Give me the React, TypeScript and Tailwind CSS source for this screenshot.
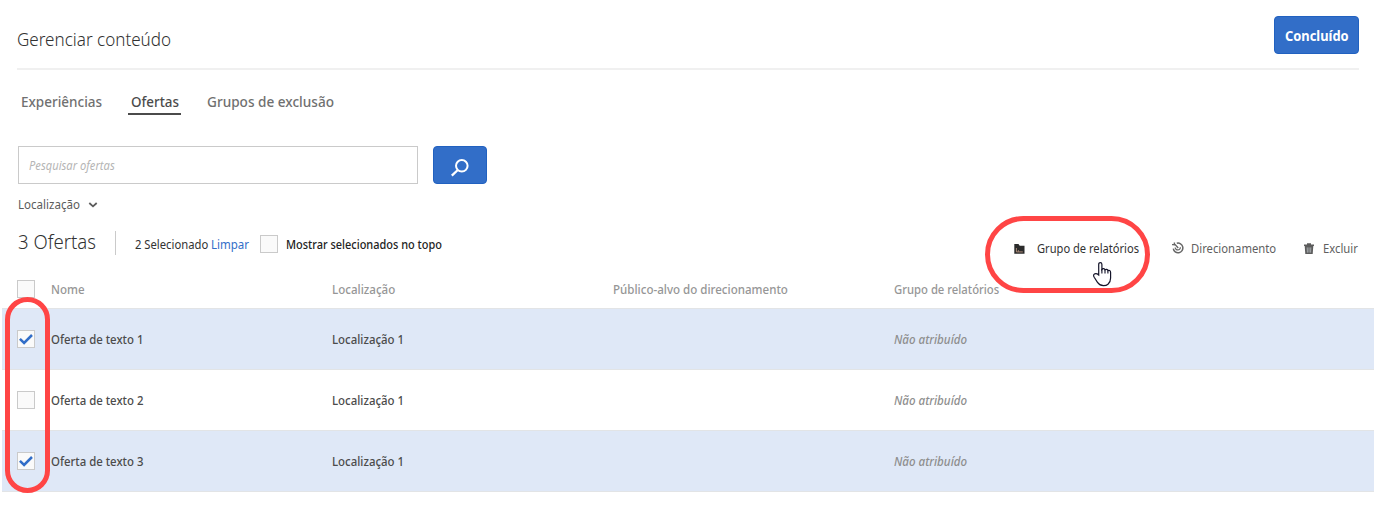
import type { ReactNode } from "react";

/* Text set slightly condensed inside a box of known width. */
function T({ box = "", text = "", children }: { box?: string; text?: string; children: ReactNode }) {
  return (
    <span className={"block shrink-0 whitespace-nowrap " + box}>
      <span className={"inline-block origin-left " + text}>{children}</span>
    </span>
  );
}

function Checkbox({ checked = false }: { checked?: boolean }) {
  return (
    <span className="flex h-[18px] w-[18px] shrink-0 items-center justify-center border border-[#cacaca] bg-[#fafafa]">
      {checked && (
        <svg width="16" height="16" viewBox="0 0 16 16" fill="none">
          <path d="M1.9 7.8 6.1 12 14 4" stroke="#326ec8" strokeWidth="2.5" />
        </svg>
      )}
    </span>
  );
}

const rows = [
  { name: "Oferta de texto 1", checked: true },
  { name: "Oferta de texto 2", checked: false },
  { name: "Oferta de texto 3", checked: true },
];

export default function App() {
  return (
    <div className="relative h-[511px] w-[1376px] overflow-hidden bg-white text-[13px] leading-[18px] text-[#4b4b4b] [font-family:'Noto_Sans',sans-serif]">
      <header className="mx-[17px] flex h-[70px] items-start justify-between border-b-2 border-[#f0f0f0]">
        <T box="pt-[26px] w-[154px]" text="scale-x-[.897] text-[19px] font-light leading-[26px] text-[#323232]">Gerenciar conteúdo</T>
        <button className="mt-4 flex h-[38px] w-[85px] items-center rounded-[4px] border border-[#2161c0] bg-[#326ec8] pl-[10px] text-left text-white">
          <T box="w-[64px] pt-[2px]" text="scale-x-[.92] text-[14px] font-bold">Concluído</T>
        </button>
      </header>

      <nav className="ml-[21px] flex h-[76px] pt-[21px] text-[15px] font-medium leading-5 text-[#707070]">
        <T box="w-[107px]" text="scale-x-[.9]">Experiências</T>
        <div className="h-[24px] w-[53px] border-b-2 border-[#4b4b4b] pl-[3px] text-[#4b4b4b]">
          <T box="w-[48px]" text="scale-x-[.894]">Ofertas</T>
        </div>
        <T box="ml-[26px] w-[127px]" text="scale-x-[.906]">Grupos de exclusão</T>
      </nav>

      <div className="ml-[18px] flex gap-[15px]">
        <div className="flex h-[38px] w-[400px] items-center border border-[#cacaca] pl-[10px] italic text-[#b5b5b5]">
          <T text="scale-x-[.93] text-[12px]">Pesquisar ofertas</T>
        </div>
        <button className="flex h-[38px] w-[54px] items-center justify-center rounded-[4px] border border-[#2161c0] bg-[#326ec8]">
          <svg width="20" height="20" viewBox="0 0 20 20" fill="none" stroke="#fff" className="mt-[5px]">
            <circle cx="11.8" cy="7.8" r="5.8" strokeWidth="2" />
            <path d="M7.8 12 1.8 17.6" strokeWidth="2.3" />
          </svg>
        </button>
      </div>

      <div className="ml-[18px] flex h-[40px] items-center">
        <T box="w-[62px]" text="scale-x-[.889] text-[#5c5c5c]">Localização</T>
        <svg width="10" height="6" viewBox="0 0 10 6" fill="none" className="ml-[8px] mt-[2px]">
          <path d="M1.3 1 5 4.4 8.7 1" stroke="#5c5c5c" strokeWidth="1.8" />
        </svg>
      </div>

      <div className="ml-[18px] mr-[17px] flex h-[56px] text-[#323232]">
        <T box="pt-[4px] w-[97px]" text="scale-x-[.928] text-[20px] font-light leading-[28px]">3 Ofertas</T>
        <div className="mt-[7px] h-6 w-px bg-[#cacaca]" />
        <div className="ml-[19px] flex h-[40px] items-center">
          <T box="w-[76px]" text="scale-x-[.865]">2 Selecionado</T>
          <T box="w-[49px]" text="scale-x-[.885] text-[#326ec8]">Limpar</T>
          <Checkbox />
          <T box="ml-2 w-[157px]" text="scale-x-[.843] font-medium text-[#222]">Mostrar selecionados no topo</T>
        </div>
        <div className="ml-auto flex h-[48px] items-center text-[#5f5f5f]">
          <svg width="11" height="10" viewBox="0 0 11 10" className="mt-[2px]">
            <path d="M0.3 0H4.5L5.7 1.8H10.5V9.8H0.3Z" fill="#2b2b2b" />
            <path d="M2.4 4V7.9H8.8M4.4 7.6V6.2" fill="none" stroke="#c9a28a" strokeWidth=".8" />
          </svg>
          <T box="ml-[12px] w-[103px]" text="scale-x-[.855] text-[#323232]">Grupo de relatórios</T>
          <svg width="12" height="12" viewBox="0 0 12 12" fill="none" stroke="#666" className="ml-[32px]">
            <path d="M4.8 1.3A4.8 4.8 0 1 1 1.3 6.6" strokeWidth="1.5" />
            <path d="M3.2 5.4A2.6 2.6 0 1 0 8.4 5.2" strokeWidth="1.2" />
            <path d="M0 2.6H3.2L6.2 6M2.4 .4V3.4" strokeWidth="1.4" />
          </svg>
          <T box="ml-[7px] w-[86px]" text="scale-x-[.868]">Direcionamento</T>
          <svg width="10" height="11" viewBox="0 0 10 11" className="ml-[27px] mt-px">
            <path d="M3 .3H7V1.5H10V3H0V1.5H3ZM.7 3H9.3L8.7 11H1.3Z" fill="#5c5c5c" />
            <path d="M3.2 4.4 3.4 9.6M5 4.4V9.6M6.8 4.4 6.6 9.6" stroke="#b8bec2" strokeWidth=".8" />
          </svg>
          <T box="ml-[9px] w-[36px]" text="scale-x-[.868]">Excluir</T>
        </div>
      </div>

      <div className="ml-[2px] w-[1372px] font-medium">
        <div className="flex h-[28px] items-start pl-[15px] text-[#969696]">
          <Checkbox />
          <T box="ml-4 w-[281px]" text="scale-x-[.889]">Nome</T>
          <T box="w-[281px]" text="scale-x-[.889]">Localização</T>
          <T box="w-[281px]" text="scale-x-[.889]">Público-alvo do direcionamento</T>
          <T text="scale-x-[.868]">Grupo de relatórios</T>
        </div>
        {rows.map((r) => (
          <div
            key={r.name}
            className={
              "flex h-[61px] items-center border-t border-[#e2e4e6] pl-[15px] last:h-[62px] last:border-b " +
              (r.checked ? "bg-[#dfe8f7]" : "bg-white")
            }
          >
            <Checkbox checked={r.checked} />
            <T box="ml-4 w-[281px]" text="scale-x-[.876]">{r.name}</T>
            <T box="w-[562px]" text="scale-x-[.88]">Localização 1</T>
            <T text="scale-x-[.889] italic text-[#8e8e8e]">Não atribuído</T>
          </div>
        ))}
      </div>

      <div className="absolute left-[5px] top-[297px] h-[196px] w-[45px] rounded-full border-[5px] border-[#ff4545]" />
      <div className="absolute left-[985px] top-[216px] h-[77px] w-[165px] rounded-full border-[5px] border-[#ff4545]" />
      <svg width="20" height="26" viewBox="0 0 20 26" className="absolute left-[1092px] top-[261px]">
        <path
          d="M6.7 14V3.4C6.7.9 9.9.9 9.9 3.4V8.4C10.6 7.2 12.6 7.4 13 8.8 14 8 15.6 8.3 15.9 9.6 17 9 18.6 9.6 18.6 11.4V17C18.6 20.5 17.4 22 16 23.2 14.6 24.4 13 24.6 11.5 24.6 8.5 24.6 7 23.5 5.5 21.3L2.2 16.3C1.2 14.6 1.4 13.2 2.8 12.8 4.4 12.4 5.6 13 6.7 14Z"
          fill="#fff"
          stroke="#15152a"
          strokeWidth="1.2"
        />
        <path d="M9.9 8V12.4M13 8.8V12.4M15.9 9.8V12.6" stroke="#15152a" strokeWidth="1.1" />
      </svg>
    </div>
  );
}
